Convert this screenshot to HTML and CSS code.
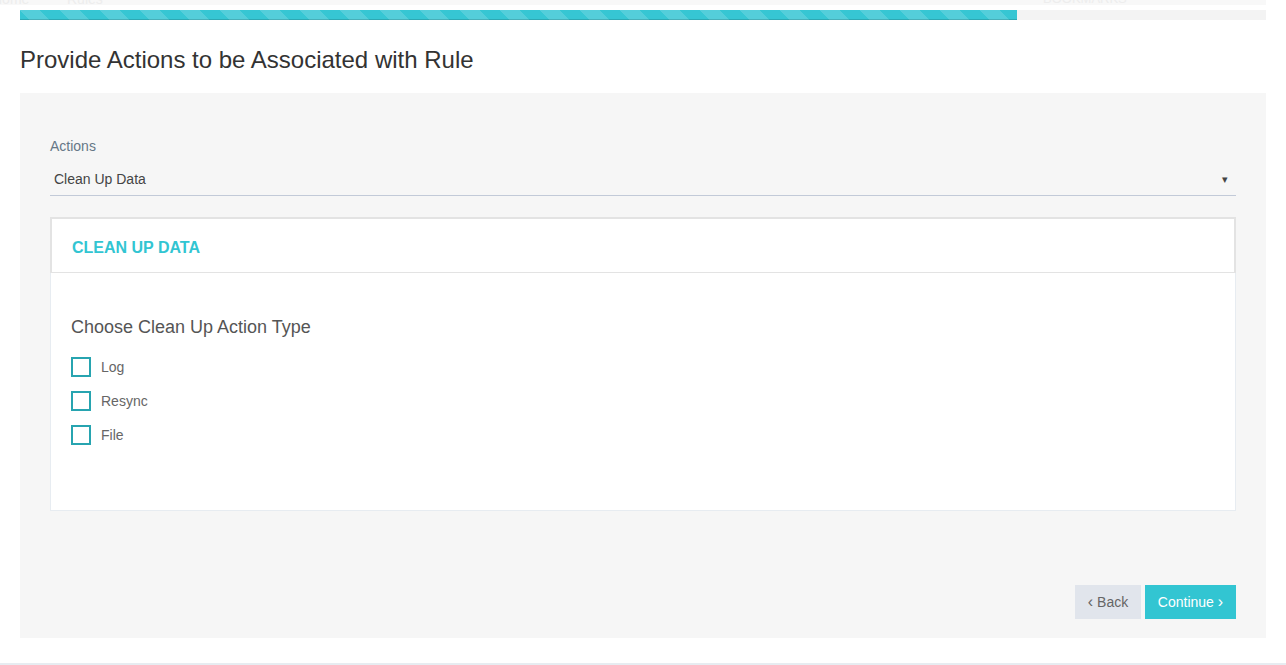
FILE: index.html
```html
<!DOCTYPE html>
<html>
<head>
<meta charset="utf-8">
<link rel="stylesheet" href="styles.css">
</head>
<body>
<div class="topstrip">
  <span class="ts-item ts-home">Home</span>
  <span class="ts-item ts-rules">Rules</span>
  <span class="ts-item ts-bm">BOOKMARKS</span>
</div>
<main class="page">
  <div class="progress"><div class="progress-bar" style="width:80%"></div></div>
  <h1 class="title">Provide Actions to be Associated with Rule</h1>
  <section class="panel">
    <div class="field">
      <label class="field-label">Actions</label>
      <div class="select">
        <span class="select-value">Clean Up Data</span>
        <span class="select-arrow">&#9662;</span>
      </div>
    </div>
    <div class="card">
      <div class="card-head">CLEAN UP DATA</div>
      <div class="card-body">
        <h3 class="subtitle">Choose Clean Up Action Type</h3>
        <div class="checks">
          <label class="check"><span class="box"></span><span class="check-label">Log</span></label>
          <label class="check"><span class="box"></span><span class="check-label">Resync</span></label>
          <label class="check"><span class="box"></span><span class="check-label">File</span></label>
        </div>
      </div>
    </div>
    <div class="actions">
      <button class="btn btn-back"><span class="chev">&#8249;</span> Back</button>
      <button class="btn btn-continue">Continue <span class="chev">&#8250;</span></button>
    </div>
  </section>
</main>
<div class="footer-line"></div>
</body>
</html>
```
FILE: styles.css
```css
* { box-sizing: border-box; }
html, body { margin: 0; padding: 0; background: #fff; }
body {
  font-family: "Liberation Sans", Arial, sans-serif;
  color: #333;
  height: 665px;
  overflow: hidden;
}
.topstrip {
  height: 5px;
  background: #f8f8f8;
  overflow: hidden;
  position: relative;
  margin: 0 20px 0 0;
}
.ts-item {
  position: absolute;
  top: -9px;
  font-size: 14px;
  color: #ededed;
  line-height: 16px;
}
.ts-home { left: -8px; }
.ts-rules { left: 67px; }
.ts-bm { left: 1043px; font-size: 13px; }
.page { padding: 5px 20px 0; }
.progress {
  height: 10px;
  background: #f3f3f3;
}
.progress-bar {
  height: 10px;
  background-color: #36c6d3;
  background-image: linear-gradient(45deg, rgba(255,255,255,.15) 25%, transparent 25%, transparent 50%, rgba(255,255,255,.15) 50%, rgba(255,255,255,.15) 75%, transparent 75%, transparent);
  background-size: 40px 40px;
  box-shadow: inset 0 -1px 0 rgba(0,0,0,.15);
}
.title {
  font-size: 24px;
  font-weight: 400;
  margin: 0;
  padding: 26px 0 0;
  line-height: 28px;
  height: 73px;
  color: #333;
}
.panel {
  background: #f6f6f6;
  height: 545px;
  padding: 45px 30px 19px;
  display: flex;
  flex-direction: column;
}
.field-label {
  display: block;
  font-size: 14px;
  line-height: 17px;
  color: #657786;
}
.select {
  margin-top: 16px;
  height: 25px;
  border-bottom: 1px solid #c2cad8;
  display: flex;
  justify-content: space-between;
  align-items: flex-start;
  padding: 0 8px 0 4px;
  font-size: 14px;
  line-height: 16px;
  color: #444;
}
.select-arrow { font-size: 11px; color: #444; line-height: 16px; }
.card {
  margin-top: 21px;
  background: #fff;
  border: 1px solid #e7ecf1;
  height: 294px;
}
.card-head {
  margin: -1px -1px 0;
  height: 56px;
  border: 2px solid #e3e3e3;
  border-width: 2px 2px 1px 2px;
  padding: 20px 0 0 20px;
  font-size: 16px;
  line-height: 18px;
  font-weight: 700;
  color: #32c5d2;
}
.card-body { padding: 44px 20px 0; }
.subtitle {
  margin: 0;
  font-size: 18px;
  font-weight: 400;
  line-height: 20px;
  color: #555;
}
.checks {
  margin-top: 20px;
  display: flex;
  flex-direction: column;
  gap: 14px;
}
.check {
  display: flex;
  align-items: center;
  gap: 10px;
  height: 20px;
}
.box {
  width: 20px;
  height: 20px;
  border: 2px solid #27a4b0;
  background: #fff;
}
.check-label {
  font-size: 14px;
  color: #666;
}
.actions {
  margin-top: auto;
  display: flex;
  justify-content: flex-end;
  gap: 4px;
}
.btn {
  border: 0;
  height: 34px;
  font-family: "Liberation Sans", Arial, sans-serif;
  font-size: 14px;
  padding: 0 12px;
  cursor: pointer;
}
.btn-back { background: #e1e5ec; color: #666; width: 66px; }
.btn-continue { background: #32c5d2; color: #fff; width: 91px; }
.chev { font-size: 16px; }
.footer-line {
  position: absolute;
  left: 0; right: 0;
  top: 663px;
  height: 2px;
  background: #e7ecf1;
}
```
